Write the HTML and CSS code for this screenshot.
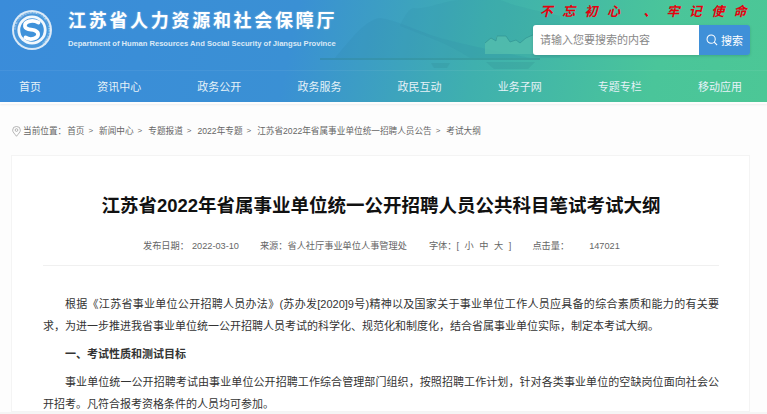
FILE: index.html
```html
<!DOCTYPE html>
<html lang="zh-CN">
<head>
    <meta charset="UTF-8">
    <meta name="viewport" content="width=device-width, initial-scale=1.0">
    <title>江苏省2022年省属事业单位统一公开招聘人员公共科目笔试考试大纲</title>
    <link rel="stylesheet" href="styles.css">
</head>
<body>
    <header class="header">
        <svg class="scenery" viewBox="0 0 767 102" width="767" height="102" aria-hidden="true">
            <path d="M335 58 C350 40 365 20 380 18 C395 20 415 30 440 38 C470 46 500 52 530 58 Z" fill="#2a7fa0" opacity="0.14"/>
            <path d="M400 26 C405 14 410 8 414 8 C425 10 440 2 458 0 L500 0 C515 6 535 10 560 16 L560 58 L470 58 C450 44 420 34 400 26 Z" fill="#2a7fa0" opacity="0.1"/>
            <path d="M485 54 V43 L491 38 L496 41 V36 H506 L510 42 L516 40 L520 43 L526 38 L535 34 V54 Z" fill="#55bfae" opacity="0.75"/>
            <path d="M485 43 L491 38 L496 41 L497 36 H506 L510 42 L516 40 L520 43 L526 38 L535 34" fill="none" stroke="#2e8f90" stroke-width="1" opacity="0.6"/>
            <path d="M320 58 H540 V60 H320 Z" fill="#2a7f88" opacity="0.35"/>
            <path d="M431 63 H450 L447 68 H434 Z M486 62 H535 L528 69 H494 Z" fill="#2a7f88" opacity="0.18"/>
        </svg>
        <div class="top">
            <div class="brand">
                <svg class="logo" viewBox="0 0 44 44" width="44" height="44" aria-hidden="true">
                    <defs>
                        <path id="ring" d="M22 22 m-16.6 0 a16.6 16.6 0 1 1 33.2 0 a16.6 16.6 0 1 1 -33.2 0"/>
                    </defs>
                    <circle cx="22" cy="22" r="20" fill="#d9e9f7"/>
                    <circle cx="22" cy="22" r="18" fill="#4a98dc"/>
                    <text class="logo-ring"><textPath href="#ring">江苏省人力资源和社会保障厅江苏省人力资源和社会保障厅</textPath></text>
                    <circle cx="22" cy="22" r="14.6" fill="#f2f8fd"/>
                    <circle cx="22" cy="22" r="11.8" fill="#3f92da"/>
                    <path d="M28.5 14.5 C22 11 14 13.5 15 18.5 C16 22.5 22 21 25 22.5 C29.5 24.5 29 29 24 30.5 C21 31.5 18 31 15.5 29.5" fill="none" stroke="#fff" stroke-width="3.8" stroke-linecap="round"/>
                    <circle cx="20" cy="17.5" r="1.1" fill="#3f92da"/>
                    <circle cx="24" cy="26.5" r="1.1" fill="#3f92da"/>
                </svg>
                <div class="brand-text">
                    <div class="site-name">江苏省人力资源和社会保障厅</div>
                    <div class="site-en">Department of Human Resources And Social Security of Jiangsu Province</div>
                </div>
            </div>
            <div class="top-right">
                <div class="motto">
                    <span>不忘初心</span>
                    <span class="motto-sep">、</span>
                    <span>牢记使命</span>
                </div>
                <form class="search">
                    <input class="search-input" type="text" placeholder="请输入您要搜索的内容">
                    <button class="search-btn" type="button">
                        <svg viewBox="0 0 14 14" width="12" height="12" aria-hidden="true">
                            <circle cx="6" cy="6" r="4.8" fill="none" stroke="#fff" stroke-width="1.2"/>
                            <path d="M9.6 9.6 L13 13" stroke="#fff" stroke-width="1.3"/>
                        </svg>
                        搜索
                    </button>
                </form>
            </div>
        </div>
        <nav class="nav">
            <a href="#">首页</a>
            <a href="#">资讯中心</a>
            <a href="#">政务公开</a>
            <a href="#">政务服务</a>
            <a href="#">政民互动</a>
            <a href="#">业务子网</a>
            <a href="#">专题专栏</a>
            <a href="#">移动应用</a>
        </nav>
    </header>

    <div class="crumbs">
        <svg class="pin" viewBox="0 0 10 12" width="9" height="11" aria-hidden="true">
            <path d="M5 11.3 C3 8.6 .7 6.6 .7 4.5 A4.3 4.1 0 0 1 9.3 4.5 C9.3 6.6 7 8.6 5 11.3 Z" fill="none" stroke="#999" stroke-width=".8"/>
            <circle cx="5" cy="4.4" r="1.5" fill="none" stroke="#999" stroke-width=".8"/>
        </svg>
        <span>当前位置&#xFF1A;</span>
        <a href="#">首页</a><i>&gt;</i>
        <a href="#">新闻中心</a><i>&gt;</i>
        <a href="#">专题报道</a><i>&gt;</i>
        <a href="#">2022年专题</a><i>&gt;</i>
        <a href="#">江苏省2022年省属事业单位统一招聘人员公告</a><i>&gt;</i>
        <a href="#">考试大纲</a>
    </div>

    <main class="card">
        <h1>江苏省2022年省属事业单位统一公开招聘人员公共科目笔试考试大纲</h1>
        <div class="meta">
            <span class="meta-label">发布日期&#xFF1A;</span>
            <span class="meta-date">2022-03-10</span>
            <span class="meta-source">来源&#xFF1A;省人社厅事业单位人事管理处</span>
            <span class="meta-font">字体&#xFF1A;[ 小 中 大 ]</span>
            <span class="meta-hits">点击量&#xFF1A;</span>
            <span class="meta-count">147021</span>
        </div>
        <div class="article">
            <p>根据《江苏省事业单位公开招聘人员办法》(苏办发[2020]9号)精神以及国家关于事业单位工作人员应具备的综合素质和能力的有关要求&#xFF0C;为进一步推进我省事业单位统一公开招聘人员考试的科学化、规范化和制度化&#xFF0C;结合省属事业单位实际&#xFF0C;制定本考试大纲。</p>
            <p><strong>一、考试性质和测试目标</strong></p>
            <p>事业单位统一公开招聘考试由事业单位公开招聘工作综合管理部门组织&#xFF0C;按照招聘工作计划&#xFF0C;针对各类事业单位的空缺岗位面向社会公开招考。凡符合报考资格条件的人员均可参加。</p>
        </div>
    </main>
</body>
</html>
```

FILE: styles.css
```css
* {
    box-sizing: border-box;
}
html, body {
    height: 414px;
    overflow: hidden;
}
body {
    display: flex;
    flex-direction: column;
    margin: 0;
    padding-bottom: 2px;
    background-color: #f5f5f5;
    background-image: linear-gradient(#fdfdfd, #fdfdfd);
    background-repeat: no-repeat;
    background-size: 100% 412px;
    font-family: "Liberation Sans", "Noto Sans CJK SC", sans-serif;
    color: #333;
}
a {
    color: inherit;
    text-decoration: none;
}

/* header */
.header {
    position: relative;
    flex: none;
    height: 104px;
    padding-bottom: 2px;
    background: linear-gradient(102deg, #3a8cda 0%, #3a90d4 38%, #3fb0ae 62%, #4ac59a 85%, #4cc796 100%) no-repeat;
    background-size: 100% 102px;
    box-shadow: 0 1px 2px rgba(0, 0, 0, 0.06);
}
.scenery {
    position: absolute;
    left: 0;
    top: 0;
}
.top {
    position: relative;
    display: flex;
    justify-content: space-between;
    height: 70px;
    padding: 0 17px 0 10px;
}
.brand {
    display: flex;
    padding-top: 8px;
}
.logo {
    flex: none;
}
.logo-ring {
    font-size: 2.6px;
    fill: #e6f1fa;
}
.brand-text {
    margin-left: 14px;
    padding-top: 1px;
}
.site-name {
    font-size: 18px;
    line-height: 24px;
    font-weight: bold;
    letter-spacing: 2.7px;
    color: #fff;
    text-shadow: 0 0 2px rgba(255, 255, 255, 0.4);
}
.site-en {
    margin-top: 6px;
    font-size: 7.6px;
    line-height: 10px;
    font-weight: bold;
    color: #dbe9f6;
}
.top-right {
    display: flex;
    flex-direction: column;
    align-items: flex-end;
}
.motto {
    display: flex;
    height: 25px;
    margin-right: -6px;
    padding-top: 3px;
    font-size: 13px;
    line-height: 18px;
    font-weight: bold;
    font-style: italic;
    letter-spacing: 9.4px;
    color: #e6000f;
}
.motto-sep {
    margin: 0 10px 0 14px;
    letter-spacing: 0;
}
.search {
    display: flex;
    width: 217px;
    height: 30px;
    border-radius: 3px;
    overflow: hidden;
    box-shadow: 0 1px 3px rgba(0, 0, 0, 0.15);
}
.search-input {
    flex: 1;
    min-width: 0;
    padding: 0 7px;
    border: 0;
    background-color: #fff;
    font-family: inherit;
    font-size: 11px;
}
.search-input::placeholder {
    color: #888;
}
.search-btn {
    display: flex;
    flex: none;
    align-items: center;
    justify-content: center;
    gap: 3px;
    width: 51px;
    padding: 0;
    border: 0;
    background-color: #3f90d8;
    color: #fff;
    font-family: inherit;
    font-size: 11px;
}
.nav {
    position: relative;
    display: flex;
    justify-content: space-between;
    height: 32px;
    padding: 0 25px 0 19px;
    border-top: 1px solid rgba(255, 255, 255, 0.06);
    font-size: 11px;
    line-height: 33px;
    color: #e6f2f8;
}

/* breadcrumb */
.crumbs {
    display: flex;
    flex: none;
    align-items: center;
    height: 16px;
    margin-top: 19px;
    padding-left: 12px;
    font-size: 8.64px;
    line-height: 16px;
    color: #666;
}
.pin {
    margin-right: 2px;
}
.crumbs span {
    margin-right: 1px;
}
.crumbs i {
    margin: 0 6px 0 4px;
    font-style: normal;
    font-size: 8px;
}

/* article */
.card {
    flex: 1;
    min-height: 0;
    margin: 16px 17px 0 11px;
    padding: 0 30px 0 31px;
    border: 1px solid #f4f4f4;
    background-color: #fff;
    overflow: hidden;
}
h1 {
    margin: 0;
    padding-top: 37px;
    font-size: 18.5px;
    line-height: 26px;
    font-weight: bold;
    text-align: center;
    color: #111;
}
.meta {
    display: flex;
    height: 17px;
    margin: 19px 0 0 100px;
    font-size: 9.2px;
    line-height: 17px;
    color: #666;
}
.meta-date {
    margin-left: 3px;
}
.meta-source {
    margin-left: 21px;
}
.meta-font {
    margin-left: 22px;
    word-spacing: 3px;
}
.meta-hits {
    margin-left: 21px;
}
.meta-count {
    margin-left: 20px;
}
.article {
    margin-top: 10px;
    padding-top: 27px;
    border-top: 1px solid #f0f0f0;
    font-size: 11px;
    line-height: 22px;
    color: #333;
}
.article p {
    margin: 0 0 6px;
    text-indent: 2em;
    text-align: justify;
}
```
